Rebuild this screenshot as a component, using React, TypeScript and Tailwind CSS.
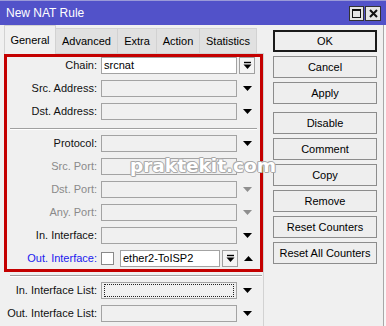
import React from "react";

const font = { fontFamily: '"Liberation Sans", Arial, sans-serif' };

function Down({ muted }: { muted?: boolean }) {
  return (
    <svg width="9" height="5" viewBox="0 0 9 5">
      <path d="M0 0h9L4.5 5z" fill={muted ? "#8f8f8f" : "#000"} />
    </svg>
  );
}

function Up() {
  return (
    <svg width="9" height="5" viewBox="0 0 9 5">
      <path d="M0 5h9L4.5 0z" fill="#000" />
    </svg>
  );
}

function DropButton() {
  return (
    <div className="w-[16px] h-[17px] border border-[#a0a0a0] bg-[#f4f4f4] flex items-center justify-center">
      <svg width="9" height="9" viewBox="0 0 9 9">
        <path d="M1 1.5h7" stroke="#000" strokeWidth="1.4" />
        <path d="M0.5 3.5h8L4.5 8z" fill="#000" />
      </svg>
    </div>
  );
}

type Tone = "normal" | "muted" | "blue";

function Row({
  label,
  tone = "normal",
  white,
  value,
  focus,
  trailing,
}: {
  label: string;
  tone?: Tone;
  white?: boolean;
  value?: string;
  focus?: boolean;
  trailing?: React.ReactNode;
}) {
  const color =
    tone === "muted" ? "text-[#8a8a8a]" : tone === "blue" ? "text-[#1a1aee]" : "text-[#111]";
  return (
    <div className="flex items-center h-[17px]">
      <div className={`w-[90px] text-right text-[11px] leading-none whitespace-nowrap ${color}`}>{label}</div>
      <div
        className={`ml-[4px] w-[136px] h-[17px] border border-[#a3a3a3] flex items-center px-[2px] text-[11px] text-black ${
          white ? "bg-white" : "bg-[#f0f0f0]"
        }`}
      >
        {focus ? <div className="w-full h-[13px] border border-dotted border-[#222]" /> : value}
      </div>
      <div className="ml-[2px] w-[16px] h-[17px] flex items-center justify-center">{trailing}</div>
    </div>
  );
}

function Btn({ children, main }: { children: React.ReactNode; main?: boolean }) {
  return (
    <div
      className={`h-[22px] flex items-center justify-center text-[11px] text-black bg-[#eeeeee] ${
        main ? "border-2 border-[#1a1a1a]" : "border border-[#8c8c8c]"
      }`}
    >
      {children}
    </div>
  );
}

export default function App() {
  const tabs = ["Advanced", "Extra", "Action", "Statistics"];
  const tabWidths = ["w-[62px]", "w-[39px]", "w-[43px]", "w-[57px]"];
  return (
    <div className="w-[386px] h-[326px] bg-[#f0f0f0] flex flex-col overflow-hidden relative" style={font}>
      {/* title bar */}
      <div className="h-[25px] bg-[#5252c9] border-t border-[#9a9ad8] flex items-center justify-between pl-[6px] pr-[5px] shrink-0">
        <span className="text-white text-[12px]">New NAT Rule</span>
        <div className="flex gap-[1px]">
          <div className="w-[15px] h-[15px] bg-[#e4e4e4] border border-[#333] flex items-center justify-center">
            <div className="w-[9px] h-[9px] border border-[#111] border-t-2" />
          </div>
          <div className="w-[16px] h-[15px] bg-[#e4e4e4] border border-[#333] flex items-center justify-center">
            <svg width="9" height="9" viewBox="0 0 9 9">
              <path d="M1 1l7 7M8 1L1 8" stroke="#111" strokeWidth="2" />
            </svg>
          </div>
        </div>
      </div>

      <div className="flex flex-1">
        {/* left */}
        <div className="w-[264px] pl-[4px] flex flex-col">
          <div className="h-[28px] flex items-end">
            <div className="w-[52px] h-[29px] -mb-[1px] bg-[#f0f0f0] border border-b-0 border-[#d2d2d2] flex items-center justify-center text-[11px] text-black z-10">
              General
            </div>
            {tabs.map((t, i) => (
              <div
                key={t}
                className={`${tabWidths[i]} h-[25px] bg-[#e1e1e1] border border-l-0 border-b-0 border-[#d2d2d2] flex items-center justify-center text-[11px] text-black`}
              >
                {t}
              </div>
            ))}
          </div>
          <div className="flex-1 border-t border-r border-[#d2d2d2] flex flex-col">
            <div className="border-[3px] border-[#c40000] pt-0 pb-[2px] flex flex-col">
              <div className="flex flex-col gap-[6px]">
                <Row label="Chain:" white value="srcnat" trailing={<DropButton />} />
                <Row label="Src. Address:" trailing={<Down />} />
                <Row label="Dst. Address:" trailing={<Down />} />
              </div>
              <div className="mt-[8px] mb-[6px] mx-[3px] h-[2px] border-t border-[#a0a0a0] border-b border-b-white" />
              <div className="flex flex-col gap-[6px] -mt-[1px]">
                <Row label="Protocol:" trailing={<Down />} />
                <Row label="Src. Port:" tone="muted" trailing={<Down muted />} />
                <Row label="Dst. Port:" tone="muted" trailing={<Down muted />} />
                <Row label="Any. Port:" tone="muted" trailing={<Down muted />} />
                <Row label="In. Interface:" trailing={<Down />} />
                <div className="flex items-center h-[17px]">
                  <div className="w-[90px] text-right text-[11px] leading-none text-[#1a1aee]">Out. Interface:</div>
                  <div className="ml-[4px] w-[13px] h-[13px] border border-[#8a8a8a] bg-white" />
                  <div className="ml-[6px] w-[100px] h-[17px] border border-[#a3a3a3] bg-white flex items-center px-[2px] text-[11px] text-black">
                    ether2-ToISP2
                  </div>
                  <div className="ml-[2px]">
                    <DropButton />
                  </div>
                  <div className="ml-[2px] w-[16px] h-[17px] flex items-center justify-center">
                    <Up />
                  </div>
                </div>
              </div>
            </div>
            <div className="mt-[3px] mb-[5px] ml-[6px] mr-[1px] h-[2px] border-t border-[#a0a0a0] border-b border-b-white" />
            <div className="pl-[3px] flex flex-col gap-[6px]">
              <Row label="In. Interface List:" focus trailing={<Down />} />
              <Row label="Out. Interface List:" trailing={<Down />} />
            </div>
          </div>
        </div>

        {/* right buttons */}
        <div className="w-[104px] ml-[9px] pt-[5px] flex flex-col">
          <div className="flex flex-col gap-[4px]">
            <Btn main>OK</Btn>
            <Btn>Cancel</Btn>
            <Btn>Apply</Btn>
          </div>
          <div className="mt-[8px] flex flex-col gap-[4px]">
            <Btn>Disable</Btn>
            <Btn>Comment</Btn>
            <Btn>Copy</Btn>
            <Btn>Remove</Btn>
            <Btn>Reset Counters</Btn>
            <Btn>Reset All Counters</Btn>
          </div>
        </div>
        <div className="ml-[6px] w-[3px] border-l border-[#a8a8a8] bg-[#f7f7f7]" />
      </div>

      {/* watermark */}
      <div
        className="absolute left-[130px] top-[152px] text-[18.5px] font-bold text-white pointer-events-none"
        style={{
          fontFamily: '"DejaVu Sans", Verdana, sans-serif',
          textShadow:
            "1px 0 0 #a8a8a8, -1px 0 0 #a8a8a8, 0 1px 0 #a8a8a8, 0 -1px 0 #a8a8a8, 1px 1px 0 #bdbdbd, -1px -1px 0 #bdbdbd",
        }}
      >
        praktekit.com
      </div>
    </div>
  );
}
